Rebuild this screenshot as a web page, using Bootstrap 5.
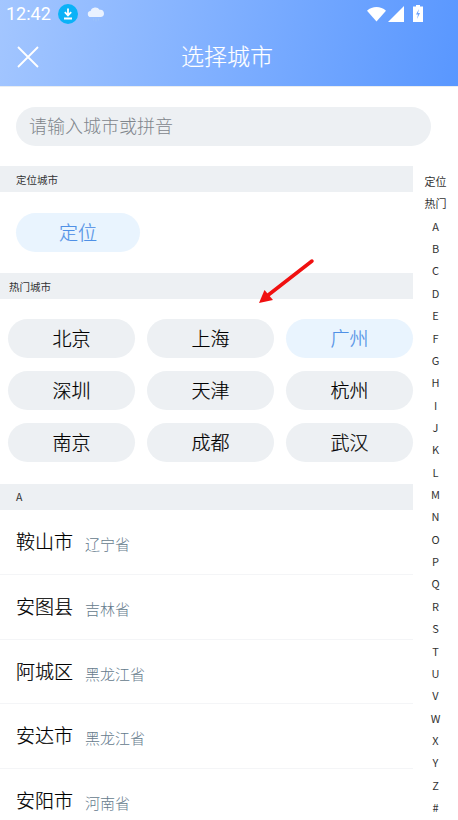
<!DOCTYPE html>
<html lang="zh-CN">
<head>
  <meta charset="UTF-8">
  <meta name="viewport" content="width=device-width, initial-scale=1.0">
  <title>选择城市</title>
  <link href="https://cdn.jsdelivr.net/npm/bootstrap@5.3.0/dist/css/bootstrap.min.css" rel="stylesheet">
  <style>
    html, body { height: 820px; overflow: hidden; }
    body {
      font-family: "Noto Sans CJK SC", "Noto Sans", sans-serif;
      font-weight: 300;
      background: #fff;
      color: #000;
      position: relative;
    }
    .top-area {
      height: 87px;
      background: linear-gradient(100deg, #a3c6ff 0%, #5997ff 100%);
      border-bottom: 1px solid #e9edf1;
      color: #fff;
    }
    .status-row { height: 27px; padding: 0 35px 0 6px; }
    .status-time { font-family: Roboto, sans-serif; font-weight: 400; font-size: 18px; line-height: 27px; width: 52px; }
    .status-cloud { margin-left: 9px; }
    .status-signal { margin-left: 2px; }
    .status-battery { margin-left: 9px; }
    .header-row { height: 59px; padding-left: 17px; }
    .header-title { font-size: 23px; line-height: 57px; left: 0; right: 4px; top: 27px; -webkit-text-stroke: 0.15px #fff; }
    .search-wrap { padding: 20px 27px 20px 16px; }
    .search-box {
      height: 39px;
      border-radius: 20px;
      background: #edf0f3;
      color: #7f868c;
      font-size: 18px;
      line-height: 37px;
      padding-left: 13px;
    }
    .main-col { width: 413px; }
    .sect-head {
      height: 26px;
      background: #edf0f3;
      font-size: 10.5px;
      font-weight: 400;
      line-height: 27px;
      color: #333;
    }
    .sect-letter { line-height: 25px; }
    .pad-16 { padding-left: 16px; }
    .pad-8 { padding-left: 9px; }
    .pill {
      height: 39px;
      border-radius: 20px;
      background: #edf0f3;
      font-size: 19px;
      line-height: 38px;
      text-align: center;
      -webkit-text-stroke: 0.2px currentColor;
    }
    .pill-blue { background: #e9f4fe; color: #4f90e6; }
    .locate-wrap { padding: 21px 0; }
    .locate-pill { width: 124px; margin-left: 16px; }
    .hot-grid {
      display: grid;
      grid-template-columns: 127px 126.5px 127px;
      column-gap: 12.25px;
      row-gap: 13px;
      padding: 20px 0 22px 8px;
    }
    .city-row {
      height: 64.8px;
      padding-left: 16px;
      border-bottom: 1px solid #f4f5f7;
    }
    .city-name { font-size: 19px; line-height: 61px; -webkit-text-stroke: 0.2px currentColor; }
    .city-prov { font-size: 15px; color: #647a8c; margin-left: 12px; line-height: 62px; padding-top: 3px; }
    .index-col {
      width: 45px;
      top: 170px;
      right: 0;
      font-size: 11px;
      font-weight: 400;
      text-align: center;
      color: #333;
    }
    .index-col div { height: 22.36px; line-height: 22.36px; }
    .arrow-over { left: 255px; top: 255px; }
  </style>
</head>
<body>

  <div class="top-area">
    <div class="status-row d-flex align-items-center">
      <span class="status-time">12:42</span>
      <svg width="20" height="20" viewBox="0 0 20 20">
        <circle cx="10" cy="10" r="10" fill="#0bb2f7"/>
        <path d="M10 4.500v6M6.800 8.200 10 11.400l3.200-3.200M6 14.500h8" stroke="#fff" stroke-width="1.800" fill="none"/>
      </svg>
      <svg class="status-cloud" width="18" height="18" viewBox="0 0 18 18">
        <path d="M4 12a3 3 0 0 1-.4-6A5 5 0 0 1 12.600 4.800 3.600 3.600 0 0 1 14 12z" fill="#eaf2ff"/>
        <path d="M6.500 13.500v2M9 13.500v3M11.500 13.500v2" stroke="#9cc3f8" stroke-width="1"/>
      </svg>
      <span class="ms-auto d-flex align-items-center">
        <svg width="19" height="16" viewBox="0 0 20 16"><path d="M0 4.500C5.500-.8 14.500-.8 20 4.500L10 16z" fill="#fff"/></svg>
        <svg class="status-signal" width="16" height="16" viewBox="0 0 16 16"><path d="M16 0v16H0z" fill="#fff"/></svg>
        <svg class="status-battery" width="10" height="17" viewBox="0 0 10 17"><path d="M3 0h4v1.500h3V17H0V1.500h3z" fill="#fff"/><path d="M6 4 3 9.500h2L4 14l3-6H5z" fill="#6ea4fc"/></svg>
      </span>
    </div>
    <div class="header-row d-flex align-items-center">
      <svg width="22" height="22" viewBox="0 0 22 22"><path d="M1 1l20 20M21 1 1 21" stroke="#fff" stroke-width="1.800" fill="none"/></svg>
    </div>
    <div class="header-title position-absolute text-center">选择城市</div>
  </div>

  <div class="search-wrap">
    <div class="search-box">请输入城市或拼音</div>
  </div>

  <div class="main-col">
    <div class="sect-head pad-16">定位城市</div>
    <div class="locate-wrap">
      <div class="pill pill-blue locate-pill">定位</div>
    </div>

    <div class="sect-head pad-8">热门城市</div>
    <div class="hot-grid" id="hot-grid"></div>

    <div class="sect-head sect-letter pad-16">A</div>
    <div id="city-list"></div>
  </div>

  <div class="index-col position-absolute" id="index-col"></div>

  <svg class="arrow-over position-absolute" width="62" height="50" viewBox="0 0 62 50">
    <path d="M57 6 12 41" stroke="#f01010" stroke-width="3.500" stroke-linecap="round"/>
    <path d="M4 48 9.500 35 18 45z" fill="#f01010"/>
  </svg>

  <script src="https://cdn.jsdelivr.net/npm/bootstrap@5.3.0/dist/js/bootstrap.bundle.min.js"></script>
  <script>
    const hotCities = ["北京", "上海", "广州", "深圳", "天津", "杭州", "南京", "成都", "武汉"];
    const cities = [
      ["鞍山市", "辽宁省"], ["安图县", "吉林省"], ["阿城区", "黑龙江省"],
      ["安达市", "黑龙江省"], ["安阳市", "河南省"]
    ];
    const letters = ["定位", "热门", ..."ABCDEFGHIJKLMNOPQRSTUVWXYZ#"];

    document.getElementById("hot-grid").innerHTML = hotCities.map(c =>
      `<div class="pill ${c === "广州" ? "pill-blue" : ""}">${c}</div>`).join("");

    document.getElementById("city-list").innerHTML = cities.map(c =>
      `<div class="city-row d-flex"><span class="city-name">${c[0]}</span><span class="city-prov">${c[1]}</span></div>`).join("");

    document.getElementById("index-col").innerHTML = letters.map(l => `<div>${l}</div>`).join("");
  </script>
</body>
</html>
